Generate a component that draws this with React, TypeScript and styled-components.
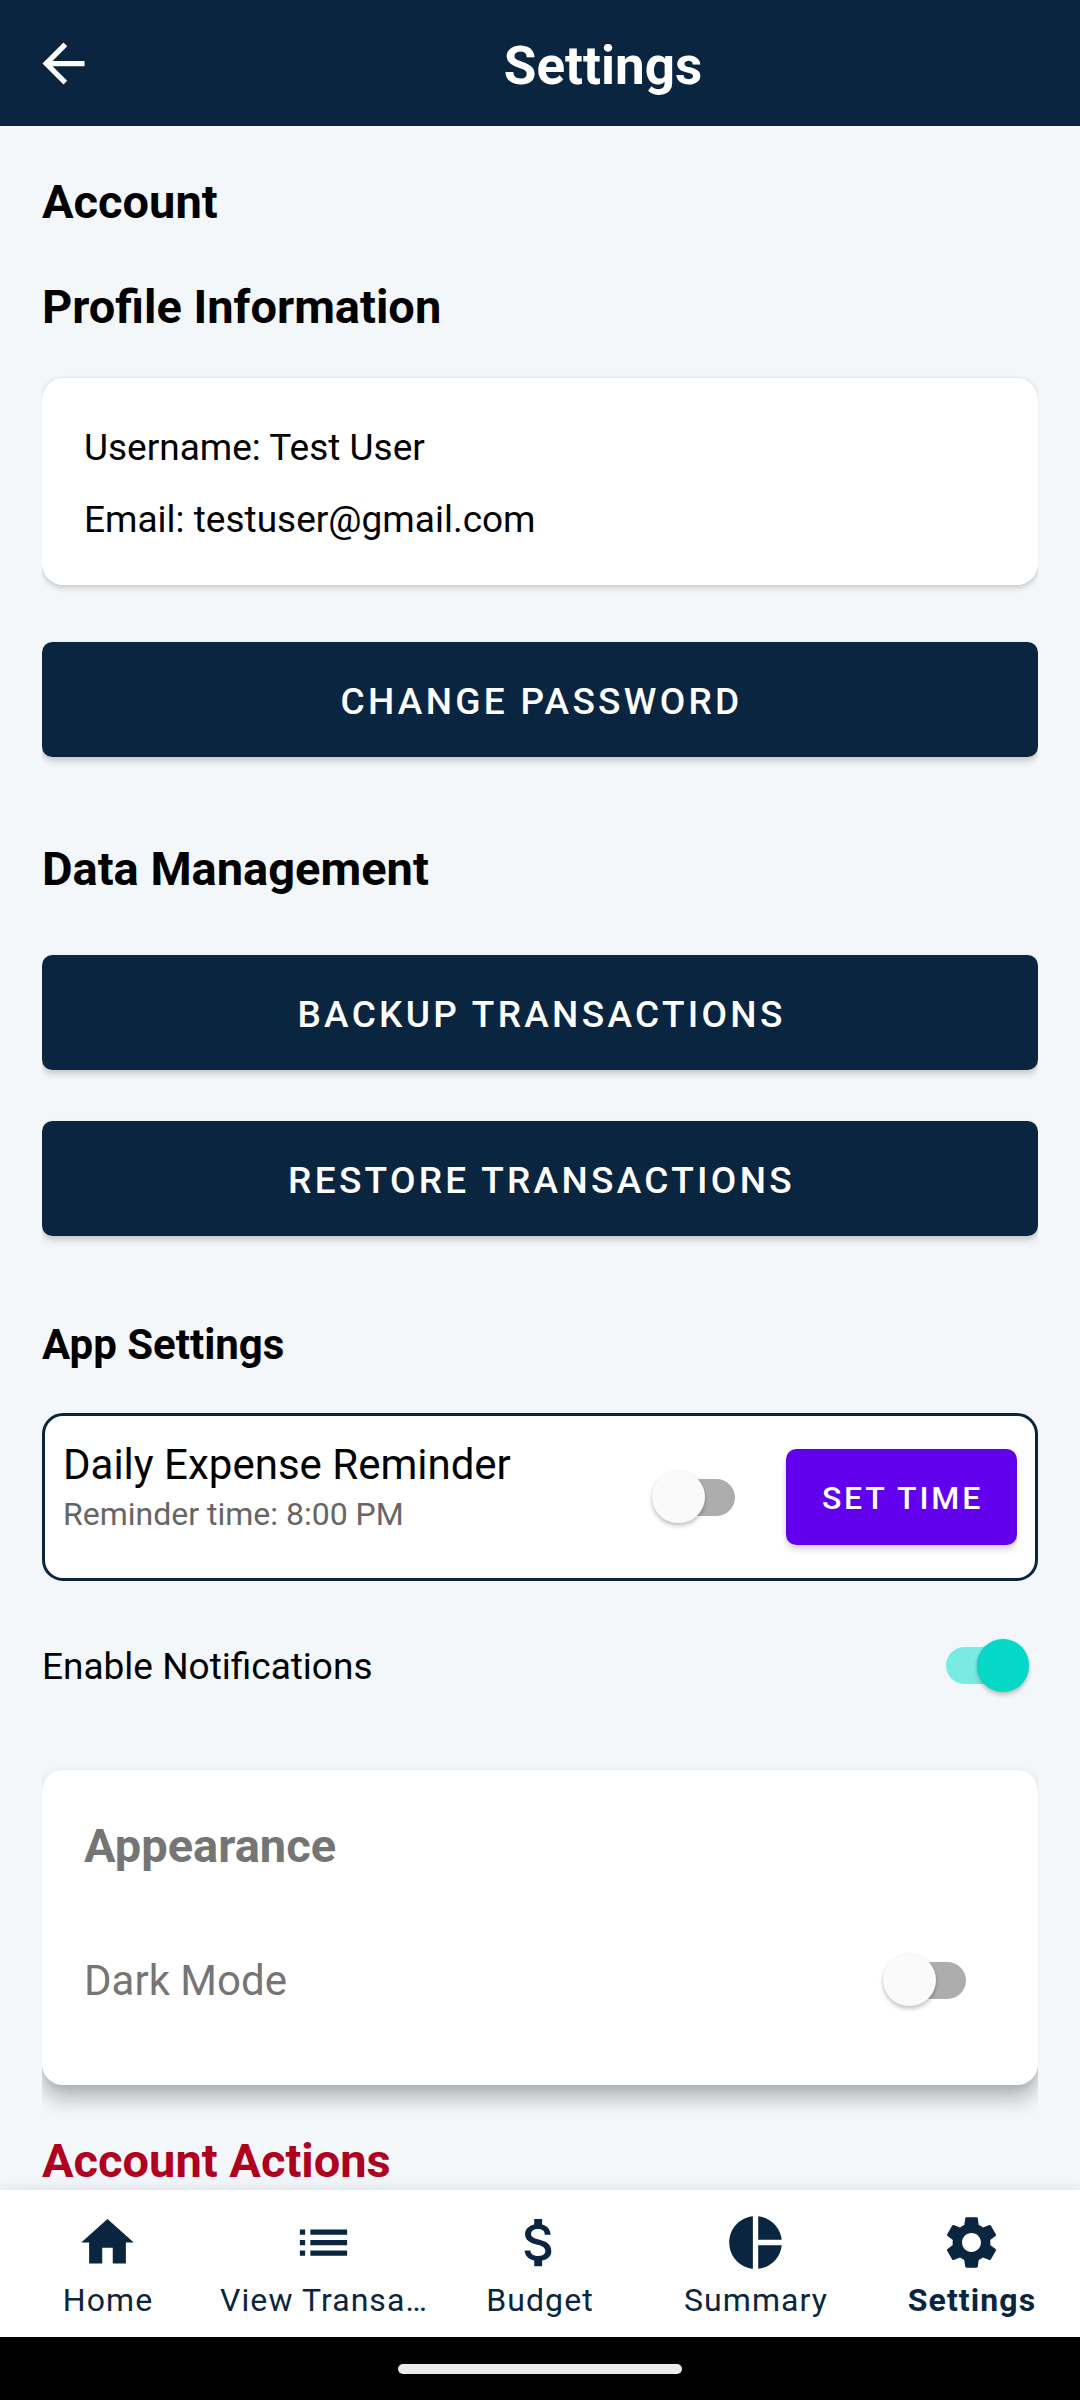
import React from 'react';
import styled, { createGlobalStyle } from 'styled-components';

const navy = '#0a2540';

const GlobalStyle = createGlobalStyle`
  *, *::before, *::after { box-sizing: border-box; }
  html, body { margin: 0; padding: 0; background: #f3f7fa; }
  body { font-family: Roboto, "Liberation Sans", sans-serif; }
  button { font-family: inherit; border: 0; padding: 0; margin: 0; }
`;

const Screen = styled.div`
  display: flex;
  flex-direction: column;
  width: 1080px;
  height: 2400px;
  overflow: hidden;
  background: #f3f7fa;
  color: #000;
`;

const TopBar = styled.header`
  display: flex;
  align-items: center;
  flex: none;
  height: 126px;
  background: ${navy};
  color: #fff;
`;

const BackButton = styled.button`
  display: flex;
  align-items: center;
  justify-content: center;
  width: 126px;
  height: 126px;
  background: none;
  color: #fff;
`;

const Title = styled.h1`
  flex: 1;
  margin: 0;
  padding-top: 6px;
  text-align: center;
  font-size: 53px;
  line-height: 62px;
  font-weight: 700;
`;

const Content = styled.main`
  flex: 1;
  min-height: 0;
  margin: 0 42px;
  overflow: clip;
  display: flex;
  flex-direction: column;
`;

const Heading = styled.h2<{ $top: number; $size?: number; $color?: string }>`
  flex: none;
  margin: ${(p) => p.$top}px 0 0;
  font-size: ${(p) => p.$size ?? 47}px;
  line-height: 56px;
  font-weight: 700;
  color: ${(p) => p.$color ?? '#000'};
`;

const Card = styled.section<{ $top: number; $height: number; $raised?: boolean }>`
  flex: none;
  display: flex;
  flex-direction: column;
  margin-top: ${(p) => p.$top}px;
  height: ${(p) => p.$height}px;
  padding: 0 42px;
  border-radius: 21px;
  background: #fff;
  box-shadow: ${(p) =>
    p.$raised
      ? '0 14px 20px rgba(0,0,0,.25), 0 3px 8px rgba(0,0,0,.08)'
      : '0 3px 6px rgba(0,0,0,.16), 0 0 3px rgba(0,0,0,.10)'};
`;

const Line = styled.p<{ $top: number }>`
  margin: ${(p) => p.$top}px 0 0;
  font-size: 37px;
  line-height: 44px;
`;

const WideButton = styled.button<{ $top: number }>`
  flex: none;
  display: flex;
  align-items: center;
  justify-content: center;
  margin-top: ${(p) => p.$top}px;
  height: 115px;
  padding: 4px 0 0 3px;
  border-radius: 10.5px;
  background: ${navy};
  color: #fff;
  font-size: 37px;
  font-weight: 500;
  letter-spacing: 0.0893em;
  box-shadow: 0 5px 6px rgba(0,0,0,.14), 0 1px 4px rgba(0,0,0,.08);
`;

const ReminderBox = styled.section`
  flex: none;
  display: flex;
  margin-top: 40px;
  height: 168px;
  padding: 0 18px;
  border: 3px solid ${navy};
  border-radius: 21px;
  background: #fff;
`;

const ReminderInner = styled.div`
  flex: 1;
  display: flex;
  align-items: center;
  overflow: clip;
`;

const ReminderText = styled.div`
  flex: 1;
  align-self: flex-start;
  padding-top: 24px;
`;

const ReminderTitle = styled.div`
  font-size: 42px;
  line-height: 50px;
`;

const ReminderTime = styled.div`
  font-size: 32px;
  line-height: 38px;
  margin-top: 5px;
  color: #666;
`;

const SetTimeButton = styled.button`
  display: flex;
  align-items: center;
  justify-content: center;
  width: 231px;
  height: 96px;
  margin-left: 51px;
  padding: 2px 0 0 2px;
  border-radius: 10.5px;
  background: #6200ee;
  color: #fff;
  font-size: 32px;
  font-weight: 500;
  letter-spacing: 0.0893em;
  box-shadow: 0 5px 6px rgba(0,0,0,.14), 0 1px 4px rgba(0,0,0,.08);
`;

const SwitchRow = styled.div<{ $top: number; $end: number; $height?: number }>`
  flex: none;
  display: flex;
  align-items: center;
  justify-content: space-between;
  margin-top: ${(p) => p.$top}px;
  height: ${(p) => p.$height ?? 56}px;
  padding-right: ${(p) => p.$end}px;
`;

const Label = styled.span<{ $size: number; $color?: string }>`
  padding-top: 2px;
  font-size: ${(p) => p.$size}px;
  line-height: 50px;
  color: ${(p) => p.$color ?? '#000'};
`;

const Track = styled.span<{ $on?: boolean }>`
  display: flex;
  align-items: center;
  justify-content: ${(p) => (p.$on ? 'flex-end' : 'flex-start')};
  flex: none;
  width: 75px;
  height: 37px;
  margin: ${(p) => (p.$on ? '0 8px 0 0' : '0 0 0 8px')};
  border-radius: 18.5px;
  background: ${(p) => (p.$on ? '#7aebe1' : '#adadad')};
`;

const Thumb = styled.span<{ $on?: boolean }>`
  flex: none;
  width: 52.5px;
  height: 52.5px;
  margin: ${(p) => (p.$on ? '0 -8px 0 0' : '0 0 0 -8px')};
  border-radius: 50%;
  background: ${(p) => (p.$on ? '#05d8c6' : '#fafafa')};
  box-shadow: 0 3px 4px rgba(0,0,0,.22), 0 0 3px rgba(0,0,0,.06);
`;

const NavBar = styled.nav`
  position: relative;
  flex: none;
  display: grid;
  grid-template-columns: repeat(5, 216px);
  height: 147px;
  background: #fff;
  box-shadow: 0 0 14px rgba(0,0,0,.12);
`;

const NavItem = styled.a<{ $active?: boolean }>`
  display: flex;
  flex-direction: column;
  align-items: center;
  min-width: 0;
  padding: 21px 1px 0 0;
  color: ${navy};
  font-weight: ${(p) => (p.$active ? 700 : 400)};
`;

const NavLabel = styled.span`
  margin-top: 7px;
  padding-left: 1px;
  font-size: 32px;
  line-height: 38px;
  letter-spacing: 0.0333em;
  white-space: nowrap;
`;

const GestureBar = styled.footer`
  flex: none;
  display: flex;
  justify-content: center;
  height: 63px;
  padding-top: 27px;
  background: #000;
`;

const Pill = styled.span`
  width: 284px;
  height: 10px;
  border-radius: 5px;
  background: #ebebeb;
`;

const Glyph = styled.svg`
  flex: none;
  display: block;
  width: 63px;
  height: 63px;
  fill: currentColor;
`;

const Icon = ({ d }: { d: string }) => (
  <Glyph viewBox="0 0 24 24">
    <path d={d} />
  </Glyph>
);

const icons = {
  back: 'M20 11H7.83l5.59-5.59L12 4l-8 8 8 8 1.41-1.41L7.83 13H20v-2z',
  home: 'M10 20v-6h4v6h5v-8h3L12 3 2 12h3v8z',
  list: 'M3 13h2v-2H3v2zm0 4h2v-2H3v2zm0-8h2V7H3v2zm4 4h14v-2H7v2zm0 4h14v-2H7v2zM7 7v2h14V7H7z',
  dollar:
    'M11.8 10.9c-2.27-.59-3-1.2-3-2.15 0-1.09 1.01-1.85 2.7-1.85 1.78 0 2.44.85 2.5 2.1h2.21c-.07-1.72-1.12-3.3-3.21-3.81V3h-3v2.16c-1.94.42-3.5 1.68-3.5 3.61 0 2.31 1.91 3.46 4.7 4.13 2.5.6 3 1.48 3 2.41 0 .69-.49 1.79-2.7 1.79-2.06 0-2.87-.92-2.98-2.1h-2.2c.12 2.19 1.76 3.42 3.68 3.83V21h3v-2.15c1.95-.37 3.5-1.5 3.5-3.55 0-2.84-2.43-3.81-4.7-4.4z',
  pie: 'M11 2v20c-5.07-.5-9-4.79-9-10s3.93-9.5 9-10zm2.03 0v8.99H22c-.47-4.74-4.24-8.52-8.97-8.99zm0 11.01V22c4.74-.47 8.5-4.25 8.97-8.99h-8.97z',
  gear: 'M19.14 12.94c.04-.3.06-.61.06-.94 0-.32-.02-.64-.07-.94l2.03-1.58c.18-.14.23-.41.12-.61l-1.92-3.32c-.12-.22-.37-.29-.59-.22l-2.39.96c-.5-.38-1.03-.7-1.62-.94l-.36-2.54c-.04-.24-.24-.41-.48-.41h-3.84c-.24 0-.43.17-.47.41l-.36 2.54c-.59.24-1.13.57-1.62.94l-2.39-.96c-.22-.08-.47 0-.59.22L2.74 8.87c-.12.21-.08.47.12.61l2.03 1.58c-.05.3-.09.63-.09.94s.02.64.07.94l-2.03 1.58c-.18.14-.23.41-.12.61l1.92 3.32c.12.22.37.29.59.22l2.39-.96c.5.38 1.03.7 1.62.94l.36 2.54c.05.24.24.41.48.41h3.84c.24 0 .44-.17.47-.41l.36-2.54c.59-.24 1.13-.56 1.62-.94l2.39.96c.22.08.47 0 .59-.22l1.92-3.32c.12-.22.07-.47-.12-.61l-2.01-1.58zM12 15.6c-1.98 0-3.6-1.62-3.6-3.6s1.62-3.6 3.6-3.6 3.6 1.62 3.6 3.6-1.62 3.6-3.6 3.6z',
};

const Switch = ({ on }: { on?: boolean }) => (
  <Track $on={on}>
    <Thumb $on={on} />
  </Track>
);

const tabs = [
  { label: 'Home', icon: icons.home },
  { label: 'View Transa…', icon: icons.list },
  { label: 'Budget', icon: icons.dollar },
  { label: 'Summary', icon: icons.pie },
  { label: 'Settings', icon: icons.gear, active: true },
];

export default function App() {
  return (
    <Screen>
      <GlobalStyle />
      <TopBar>
        <BackButton aria-label="Back">
          <Icon d={icons.back} />
        </BackButton>
        <Title>Settings</Title>
      </TopBar>
      <Content>
        <Heading $top={48}>Account</Heading>
        <Heading $top={49}>Profile Information</Heading>
        <Card $top={43} $height={207}>
          <Line $top={48}>Username: Test User</Line>
          <Line $top={28}>Email: testuser@gmail.com</Line>
        </Card>
        <WideButton $top={57}>CHANGE PASSWORD</WideButton>
        <Heading $top={84}>Data Management</Heading>
        <WideButton $top={58}>BACKUP TRANSACTIONS</WideButton>
        <WideButton $top={51}>RESTORE TRANSACTIONS</WideButton>
        <Heading $top={81} $size={42}>App Settings</Heading>
        <ReminderBox>
          <ReminderInner>
            <ReminderText>
              <ReminderTitle>Daily Expense Reminder</ReminderTitle>
              <ReminderTime>Reminder time: 8:00 PM</ReminderTime>
            </ReminderText>
            <Switch />
            <SetTimeButton>SET TIME</SetTimeButton>
          </ReminderInner>
        </ReminderBox>
        <SwitchRow $top={56} $end={9} $height={57}>
          <Label $size={37}>Enable Notifications</Label>
          <Switch on />
        </SwitchRow>
        <Card $top={76} $height={315} $raised>
          <Heading $top={48} $color="#757575">Appearance</Heading>
          <SwitchRow $top={78} $end={30}>
            <Label $size={42} $color="#757575">Dark Mode</Label>
            <Switch />
          </SwitchRow>
        </Card>
        <Heading $top={48} $color="#b00020">Account Actions</Heading>
      </Content>
      <NavBar>
        {tabs.map((t) => (
          <NavItem key={t.label} $active={t.active}>
            <Icon d={t.icon} />
            <NavLabel>{t.label}</NavLabel>
          </NavItem>
        ))}
      </NavBar>
      <GestureBar>
        <Pill />
      </GestureBar>
    </Screen>
  );
}
